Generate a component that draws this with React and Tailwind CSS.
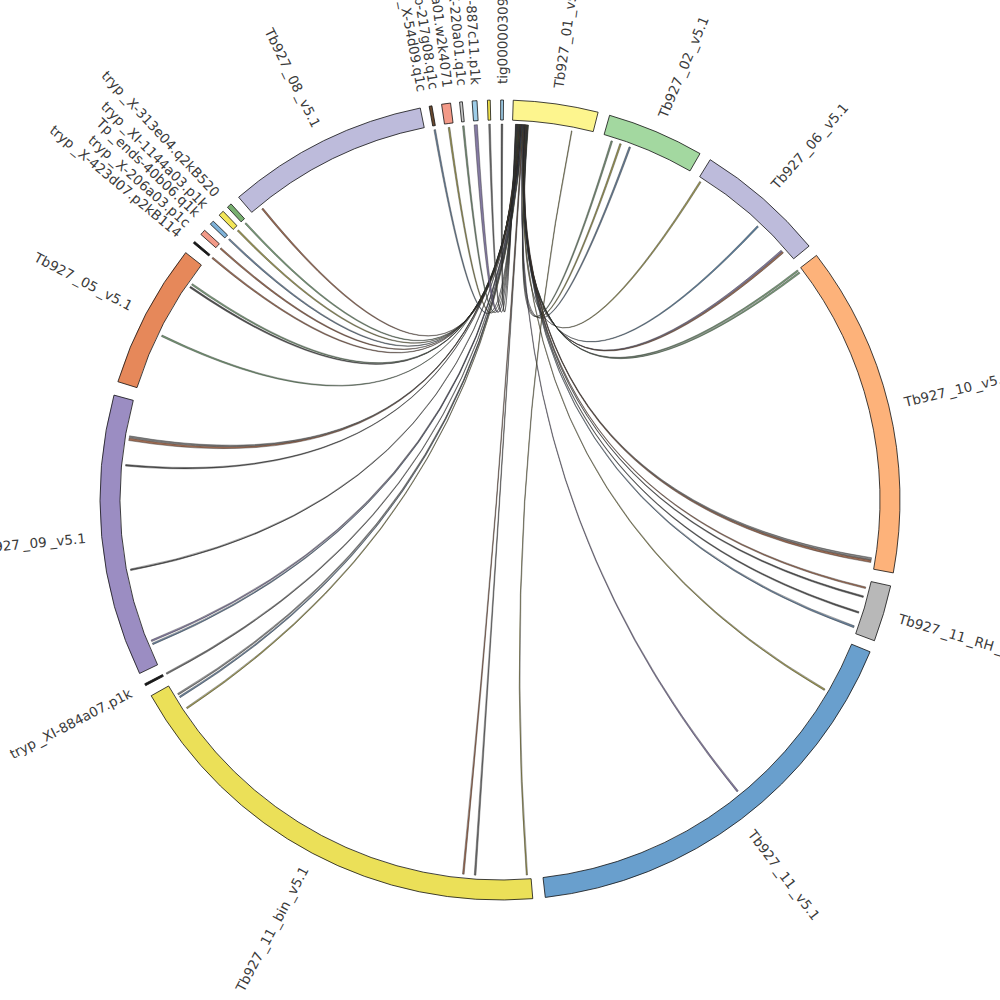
import React from 'react';

const CX = 500, CY = 500;
const R_IN = 380, R_OUT = 400, R_CHORD = 376, R_LABEL = 416;

function pt(r, deg) {
  const a = (deg * Math.PI) / 180;
  return [CX + r * Math.sin(a), CY - r * Math.cos(a)];
}

function sector(s, e) {
  const [x1, y1] = pt(R_OUT, s), [x2, y2] = pt(R_OUT, e);
  const [x3, y3] = pt(R_IN, e), [x4, y4] = pt(R_IN, s);
  return `M${x1} ${y1} A${R_OUT} ${R_OUT} 0 0 1 ${x2} ${y2} L${x3} ${y3} A${R_IN} ${R_IN} 0 0 0 ${x4} ${y4} Z`;
}

function ribbon(a1, a2, b1, b2) {
  const r = R_CHORD;
  const A1 = pt(r, a1), A2 = pt(r, a2), B1 = pt(r, b1), B2 = pt(r, b2);
  return `M${A1.join(' ')} A${r} ${r} 0 0 1 ${A2.join(' ')} Q${CX} ${CY} ${B1.join(' ')} A${r} ${r} 0 0 1 ${B2.join(' ')} Q${CX} ${CY} ${A1.join(' ')} Z`;
}

// ideograms: start, end, colour
const segments = [
  [1.9, 14.2, '#fdf58e'],   // Tb927_01
  [15.9, 30, '#a3d8a0'],    // Tb927_02
  [31.7, 50.6, '#bdbbdb'],  // Tb927_06
  [52.3, 100.5, '#fdb27a'], // Tb927_10
  [102.4, 110.6, '#b8b8b8'],// Tb927_11_RH
  [112.3, 173.5, '#699fcd'],// Tb927_11
  [175.3, 240.7, '#ebe058'],// Tb927_11_bin
  [242.35, 242.65, '#1a1a1a'],
  [244.3, 285.2, '#9b8dc2'],// Tb927_09
  [287.2, 308.2, '#e6885a'],// Tb927_05
  [309.95, 310.25, '#1a1a1a'],
  [311.6, 312.4, '#f29a88'],
  [313.6, 314.2, '#7fb2d8'],
  [315.4, 316.2, '#f3e65a'],
  [317.05, 317.75, '#78b070'],
  [319.2, 348.5, '#bdbbdb'],// Tb927_08
  [349.8, 350.2, '#6b4a30'],
  [351.6, 352.9, '#f39a88'],
  [354.2, 354.6, '#c8c8c8'],
  [356.0, 356.7, '#9ecde8'],
  [358.2, 358.6, '#f2e44c'],
  [360.1, 360.5, '#9ecde8'],
];

const labels = [
  [8.05, 'Tb927_01_v5.1'], [22.95, 'Tb927_02_v5.1'], [41.15, 'Tb927_06_v5.1'],
  [76.4, 'Tb927_10_v5.1'], [106.5, 'Tb927_11_RH_v5.1'], [142.85, 'Tb927_11_v5.1'],
  [208, 'Tb927_11_bin_v5.1'], [242.5, 'tryp_XI-884a07.p1k'], [264.75, 'Tb927_09_v5.1'],
  [297.7, 'Tb927_05_v5.1'], [309.7, 'tryp_X-423d07.p2kB114'], [311.5, 'tryp_X-206a03.p1c'],
  [313.4, 'Tp_ends-40b06.q1k'], [315, 'tryp_XI-1144a03.p1k'], [317.2, 'tryp_X-313e04.q2kB520'],
  [333.85, 'Tb927_08_v5.1'], [349.2, 'tryp_X-54d09.q1c'], [350.9, 'tryp_Xb-217g08.q1c'],
  [352.8, 'tryp_Xa01.w2k4071'], [354.8, 'tryp_X-220a01.q1c'], [356.7, 'tryp_XI-887c11.p1k'],
  [0.3, 'tig00000309'],
];

const BROWN = '#8a5034', OLIVE = '#8a8434', SLATE = '#4e6a88', GREEN = '#5e8a5e';
const PURPLE = '#6e6390', GREY = '#6f6f6f', DARK = '#333';

// links from the start of Tb927_01 to everything else: target angle, colour, width
const links = [
  [17.3, '#5e7d5e'], [18.7, OLIVE], [20.2, SLATE], [32.2, OLIVE], [43.3, '#3e6a8e'],
  [48.5, PURPLE], [48.8, BROWN], [52.4, GREEN], [52.8, GREEN], [99.0, GREY, 0.35],
  [99.4, BROWN, 0.35], [103.5, BROWN], [104.9, DARK], [107.4, DARK], [109.7, SLATE, 0.3],
  [120.3, OLIVE], [140.8, PURPLE], [183.8, '#555'], [185.6, BROWN], [236.4, OLIVE],
  [238.4, SLATE], [238.9, GREY], [242.5, '#555'], [247.5, SLATE], [248, PURPLE],
  [259.3, DARK], [275.3, DARK], [279.3, BROWN, 0.4], [279.7, GREY], [295.9, GREEN],
  [304.5, DARK], [305, GREEN], [310.1, BROWN], [312, BROWN], [313.9, SLATE],
  [315.8, OLIVE], [317.4, GREEN], [320.8, BROWN], [350, SLATE], [352.2, OLIVE],
  [354.4, '#5e7d5e'], [356.3, PURPLE, 0.5], [358.4, '#555'], [0.3, DARK],
];

function Label({ angle, text }) {
  const right = angle % 360 < 180;
  const [x, y] = pt(R_LABEL, angle);
  const rot = right ? angle - 90 : angle + 90;
  const parts = text.split('_');
  return (
    <text
      transform={`translate(${x} ${y}) rotate(${rot})`}
      textAnchor={right ? 'start' : 'end'}
      dominantBaseline="central"
    >
      {parts.map((p, i) => (i === 0 ? p : <tspan key={i} dx={3}>_{p}</tspan>))}
    </text>
  );
}

export default function App() {
  const sorted = [...links].sort((a, b) => ((a[0] - 5 + 360) % 360) - ((b[0] - 5 + 360) % 360));
  const n = sorted.length;

  return (
    <div className="w-[1000px] h-[1000px] bg-white overflow-hidden">
      <svg width="1000" height="1000" viewBox="0 0 1000 1000">
        {/* links */}
        <g stroke="#262626" strokeWidth="0.4" fillOpacity="0.85">
          {sorted.map(([t, color, w = 0.25], i) => {
            const s = 4.3 - (i * 1.9) / (n - 1);
            return <path key={i} d={ribbon(s - 0.04, s + 0.04, t - w / 2, t + w / 2)} fill={color} />;
          })}
          <path d={ribbon(10.95, 11.05, 175.8, 176.0)} fill={OLIVE} />
        </g>

        {/* ideograms */}
        <g stroke="#111" strokeWidth="0.8">
          {segments.map(([s, e, c], i) => (
            <path key={i} d={sector(s, e)} fill={c} />
          ))}
        </g>

        {/* labels */}
        <g className="font-['DejaVu_Sans',sans-serif] text-[13.5px] fill-[#3a3a3a]">
          {labels.map(([a, t]) => (
            <Label key={t} angle={a} text={t} />
          ))}
        </g>
      </svg>
    </div>
  );
}
